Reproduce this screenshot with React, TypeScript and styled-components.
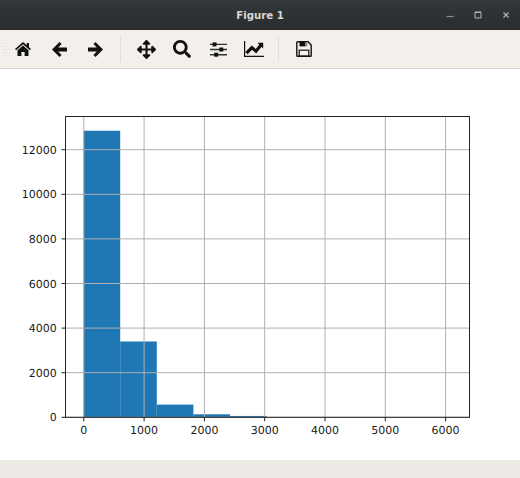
import * as React from "react";
import styled, {createGlobalStyle} from "styled-components";
import {FaArrowsAlt, FaSearch} from "react-icons/fa";

const GlobalStyle = createGlobalStyle`
  html, body {
    margin: 0;
    padding: 0;
    background: #fff;
  }
`

const Window = styled.div`
  width: 520px;
  height: 478px;
  display: flex;
  flex-direction: column;
  overflow: hidden;
  font-family: "DejaVu Sans", sans-serif;
`

const TitleBar = styled.div`
  height: 30px;
  flex: none;
  position: relative;
  display: flex;
  align-items: center;
  justify-content: flex-end;
  box-sizing: border-box;
  background: linear-gradient(#33373a, #2a2d2f);
`

const Title = styled.div`
  position: absolute;
  left: 0;
  right: 0;
  text-align: center;
  font-family: "DejaVu Sans", sans-serif;
  font-size: 10.2px;
  font-weight: 700;
  color: #d6d6d4;
`

const WindowButton = styled.div`
  width: 28px;
  height: 30px;
  display: flex;
  align-items: center;
  justify-content: center;
  color: #b4b6b6;
`

const Toolbar = styled.div`
  height: 39px;
  flex: none;
  display: flex;
  align-items: center;
  box-sizing: border-box;
  background: #f3f0eb;
  border-bottom: 1px solid #d6d2cd;
  position: relative;
  padding-left: 5px;
`

const Grip = styled.div`
  position: absolute;
  left: 2px;
  top: 12px;
  width: 6px;
  height: 15px;
  background-image: radial-gradient(#dedad4 1px, transparent 1px);
  background-size: 3px 3px;
`

const ToolButton = styled.div`
  width: 36px;
  height: 38px;
  display: flex;
  align-items: center;
  justify-content: center;
  color: #111;
  flex: none;
`

const Separator = styled.div<{ $left: number }>`
  width: 1px;
  height: 26px;
  margin: 0 7px 0 ${props => props.$left}px;
  background: #e2dfda;
  flex: none;
`

const Canvas = styled.div`
  flex: 1;
  background: #fff;
  min-height: 0;
`

const StatusBar = styled.div`
  height: 18px;
  flex: none;
  background: #eeebe7;
`

const Plot = styled.svg`
  display: block;
  width: 520px;
  height: 391px;
`

const TickLabel = styled.text`
  font-family: "DejaVu Sans", sans-serif;
  font-size: 11px;
  fill: #1a1a1a;
  text-rendering: geometricPrecision;
`

// plot coordinates are page y minus canvas top
const top = 69
const xTicks = [0, 1000, 2000, 3000, 4000, 5000, 6000]
const yTicks = [0, 2000, 4000, 6000, 8000, 10000, 12000]
const xPos = (v: number) => 83.8 + v * 0.0603
const yPos = (v: number) => 417.3 - top - v * 0.0223
const bins = [12850, 3400, 570, 135, 60]
const binWidth = 36.6
const axisTop = 116.5 - top

function Chart() {
    return (
        <Plot viewBox="0 0 520 391">
            <g fill="#1f77b4">
                {bins.map((count, i) => (
                    <rect key={i} x={83.6 + i * binWidth} y={yPos(count)} width={binWidth} height={yPos(0) - yPos(count)}/>
                ))}
            </g>
            <g stroke="#b0b0b0" strokeWidth="1">
                {xTicks.map(v => <line key={v} x1={xPos(v)} x2={xPos(v)} y1={axisTop} y2={yPos(0)}/>)}
                {yTicks.map(v => <line key={v} x1={66} x2={469} y1={yPos(v)} y2={yPos(v)}/>)}
            </g>
            <rect x="65.5" y={axisTop} width="404" height={yPos(0) - axisTop} fill="none" stroke="#222" strokeWidth="1"/>
            <g stroke="#222" strokeWidth="1">
                {xTicks.map(v => <line key={v} x1={xPos(v)} x2={xPos(v)} y1={yPos(0)} y2={yPos(0) + 4}/>)}
                {yTicks.map(v => <line key={v} x1={61.5} x2={65.5} y1={yPos(v)} y2={yPos(v)}/>)}
            </g>
            {xTicks.map(v => (
                <TickLabel key={v} x={xPos(v)} y={yPos(0) + 17} textAnchor="middle">{v}</TickLabel>
            ))}
            {yTicks.map(v => (
                <TickLabel key={v} x={56.7} y={yPos(v) + 4} textAnchor="end">{v}</TickLabel>
            ))}
        </Plot>
    );
}

const HomeIcon = () => (
    <svg width="16" height="14" viewBox="0 0 16 14" fill="currentColor">
        <path d="M8 0L11.8 3.3V1H14V5.2L16 7L14.9 8.2L8 2.3L1.1 8.2L0 7Z"/>
        <path d="M8 3.6L13.5 8.3V14H9.6V10H6.4V14H2.5V8.3Z"/>
    </svg>
)

const BackIcon = () => (
    <svg width="15" height="15" viewBox="0 0 15 15" fill="currentColor">
        <path d="M7.5 0L9.6 2.1L6.2 5.5H15V9.5H6.2L9.6 12.9L7.5 15L0 7.5Z"/>
    </svg>
)

const ForwardIcon = () => (
    <svg width="15" height="15" viewBox="0 0 15 15" fill="currentColor">
        <path d="M7.5 0L5.4 2.1L8.8 5.5H0V9.5H8.8L5.4 12.9L7.5 15L15 7.5Z"/>
    </svg>
)

const SlidersIcon = () => (
    <svg width="17" height="15" viewBox="0 0 17 15" fill="currentColor">
        <path d="M0 1.7h17v1.4H0zM0 6.8h17v1.4H0zM0 12h17v1.4H0z" fill="#333"/>
        <rect x="2.5" y="0.4" width="4" height="4"/>
        <rect x="9.3" y="5.5" width="4" height="4"/>
        <rect x="4.2" y="10.7" width="4" height="4"/>
    </svg>
)

const TrendIcon = () => (
    <svg width="20" height="16" viewBox="0 0 20 16" fill="none" stroke="currentColor">
        <path d="M0.6 0V15.3H20" strokeWidth="1.2"/>
        <path d="M2.5 12.2L7.8 6.6L12 10.2L17 4" strokeWidth="3.2"/>
        <path d="M13.4 1.8H19.2V7.6Z" fill="currentColor" stroke="none"/>
    </svg>
)

const SaveIcon = () => (
    <svg width="16" height="16" viewBox="0 0 16 16" fill="none" stroke="currentColor">
        <path d="M0.8 1.6Q0.8 0.8 1.6 0.8H12L15.2 4V14.4Q15.2 15.2 14.4 15.2H1.6Q0.8 15.2 0.8 14.4Z" strokeWidth="1.4"/>
        <rect x="3.2" y="9.2" width="9.6" height="6" strokeWidth="1.2"/>
        <path d="M3.5 1H9.5V5.4H3.5Z" fill="currentColor" stroke="none"/>
        <path d="M9.5 1H11.4V5.4H9.5Z" fill="#8c8a87" stroke="none"/>
    </svg>
)

export default function App() {
    return (
        <Window>
            <GlobalStyle/>
            <TitleBar>
                <Title>Figure 1</Title>
                <WindowButton>
                    <svg width="8" height="8" viewBox="0 0 8 8"><path d="M0.5 5.5h7" stroke="#8d9091" strokeWidth="1.2"/></svg>
                </WindowButton>
                <WindowButton>
                    <svg width="8" height="8" viewBox="0 0 8 8"><path d="M1 1h6v6h-6z M1 1.4h6" fill="none" stroke="currentColor" strokeWidth="1"/></svg>
                </WindowButton>
                <WindowButton>
                    <svg width="8" height="8" viewBox="0 0 8 8"><path d="M1.5 1.5l5 5M6.5 1.5l-5 5" stroke="currentColor" strokeWidth="1.2"/></svg>
                </WindowButton>
            </TitleBar>
            <Toolbar>
                <Grip/>
                <ToolButton><HomeIcon/></ToolButton>
                <ToolButton><BackIcon/></ToolButton>
                <ToolButton><ForwardIcon/></ToolButton>
                <Separator $left={7}/>
                <ToolButton><FaArrowsAlt size={19}/></ToolButton>
                <ToolButton><FaSearch size={18}/></ToolButton>
                <ToolButton><SlidersIcon/></ToolButton>
                <ToolButton><TrendIcon/></ToolButton>
                <Separator $left={6}/>
                <ToolButton><SaveIcon/></ToolButton>
            </Toolbar>
            <Canvas>
                <Chart/>
            </Canvas>
            <StatusBar/>
        </Window>
    );
}
